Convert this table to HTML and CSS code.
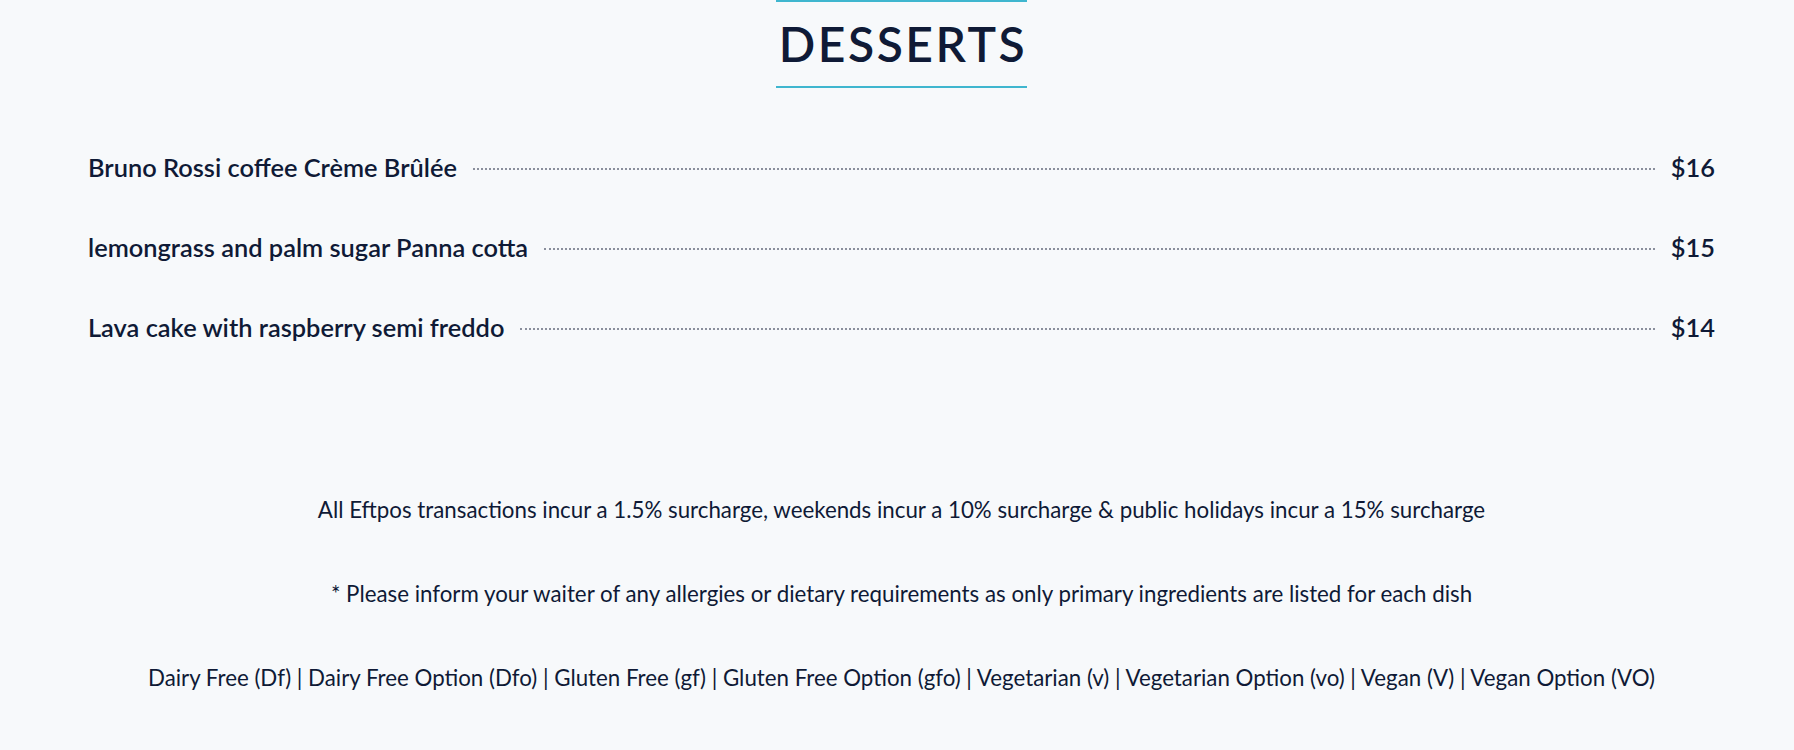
FILE: index.html
```html
<!DOCTYPE html>
<html lang="en">
<head>
<meta charset="utf-8">
<title>Desserts</title>
<link rel="stylesheet" href="styles.css">
</head>
<body>
<main class="menu">
  <header class="section-head">
    <h1 class="section-title">DESSERTS</h1>
  </header>
  <ul class="items">
    <li class="item"><span class="item-name">Bruno Rossi coffee Crème Brûlée</span><span class="leader"></span><span class="item-price">$16</span></li>
    <li class="item"><span class="item-name">lemongrass and palm sugar Panna cotta</span><span class="leader"></span><span class="item-price">$15</span></li>
    <li class="item"><span class="item-name">Lava cake with raspberry semi freddo</span><span class="leader"></span><span class="item-price">$14</span></li>
  </ul>
  <footer class="notes">
    <p class="note">All Eftpos transactions incur a 1.5% surcharge, weekends incur a 10% surcharge &amp; public holidays incur a 15% surcharge</p>
    <p class="note">* Please inform your waiter of any allergies or dietary requirements as only primary ingredients are listed for each dish</p>
    <p class="note">Dairy Free (Df) | Dairy Free Option (Dfo) | Gluten Free (gf) | Gluten Free Option (gfo) | Vegetarian (v) | Vegetarian Option (vo) | Vegan (V) | Vegan Option (VO)</p>
  </footer>
</main>
</body>
</html>
```
FILE: styles.css
```css
html, body {
  margin: 0;
  padding: 0;
  background: #f7f9fb;
}
body {
  font-family: Lato, "Noto Sans", sans-serif;
  color: #0f1a36;
}
.menu {
  display: flex;
  flex-direction: column;
}
.section-head {
  display: flex;
  justify-content: center;
  padding-left: 9px;
}
.section-title {
  margin: 0;
  padding: 14px 0 14px 3px;
  font-size: 48px;
  line-height: 56px;
  font-weight: 600;
  letter-spacing: 2.5px;
  border-top: 2px solid #3fb6cf;
  border-bottom: 2px solid #3fb6cf;
  color: #0f1a36;
}
.items {
  list-style: none;
  margin: 0;
  padding: 63px 79px 0 88px;
  display: flex;
  flex-direction: column;
  gap: 48px;
}
.item {
  display: flex;
  align-items: center;
  height: 32px;
  font-size: 25.4px;
  font-weight: 600;
}
.leader {
  flex: 1;
  margin: 4px 16px 0 16px;
  border-bottom: 2px dotted #8a8f9c;
}
.item-price {
  font-weight: 600;
}
.notes {
  padding-top: 153px;
  padding-left: 9px;
  display: flex;
  flex-direction: column;
  align-items: center;
  gap: 56px;
}
.note {
  margin: 0;
  font-size: 22.3px;
  line-height: 28px;
  text-align: center;
}
```
